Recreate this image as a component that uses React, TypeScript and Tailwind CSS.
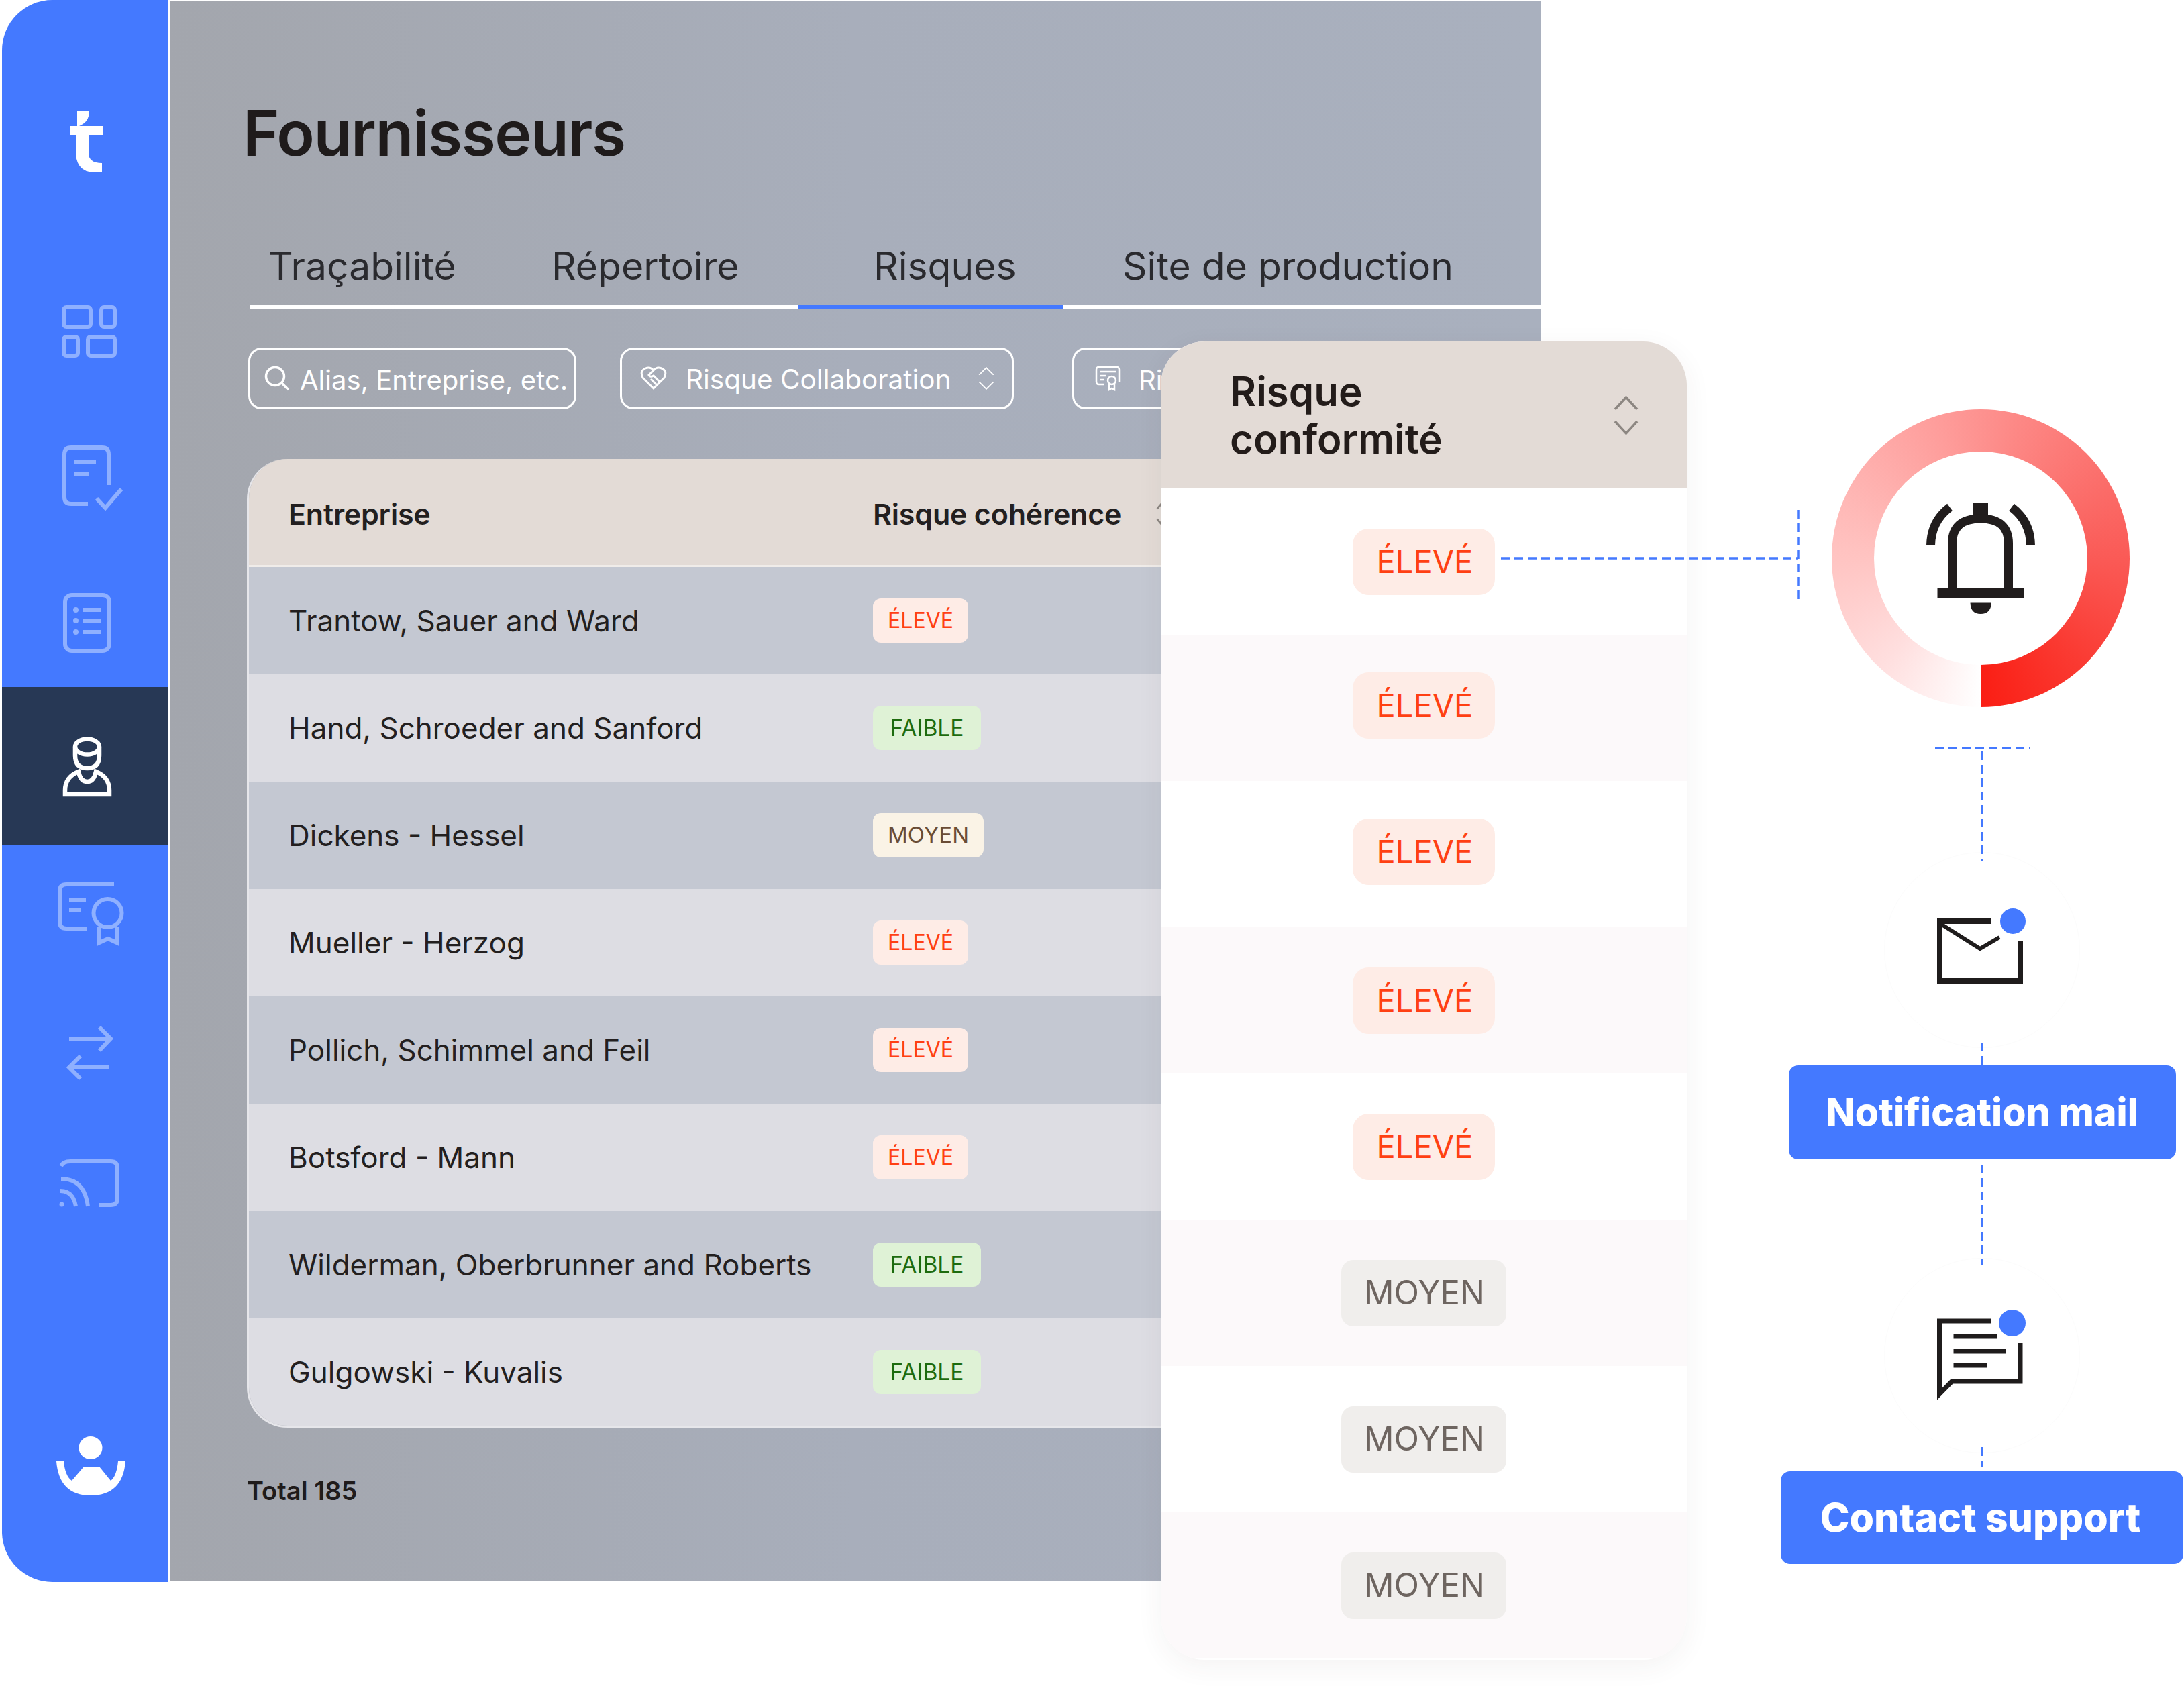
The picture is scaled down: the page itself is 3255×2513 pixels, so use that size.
import React from "react";

const INTER = "font-['Inter','Liberation_Sans',sans-serif]";

const rows: [string, "E" | "F" | "M"][] = [
  ["Trantow, Sauer and Ward", "E"],
  ["Hand, Schroeder and Sanford", "F"],
  ["Dickens - Hessel", "M"],
  ["Mueller - Herzog", "E"],
  ["Pollich, Schimmel and Feil", "E"],
  ["Botsford - Mann", "E"],
  ["Wilderman, Oberbrunner and Roberts", "F"],
  ["Gulgowski - Kuvalis", "F"],
];

function SmallBadge({ k }: { k: "E" | "F" | "M" }) {
  if (k === "E")
    return <span className="flex h-[66px] w-[142px] items-center justify-center rounded-[12px] bg-[#feece6] text-[32px] text-[#ff4013]">ÉLEVÉ</span>;
  if (k === "F")
    return <span className="flex h-[66px] w-[161px] items-center justify-center rounded-[12px] bg-[#dff2d6] text-[33.5px] text-[#1d6b0e]">FAIBLE</span>;
  return <span className="flex h-[66px] w-[165px] items-center justify-center rounded-[12px] bg-[#faf3e6] text-[33px] text-[#6a4c34]">MOYEN</span>;
}

function Chevrons({ className = "", color = "#8d8782", w = 37, h = 58, sw = 3.5 }: { className?: string; color?: string; w?: number; h?: number; sw?: number }) {
  return (
    <svg className={className} width={w} height={h} viewBox="0 0 37 58" fill="none" stroke={color} strokeWidth={sw} preserveAspectRatio="none">
      <path d="M2 20 L18.5 2 L35 20" />
      <path d="M2 38 L18.5 56 L35 38" />
    </svg>
  );
}

const iconC = "#8fb0ff";

function SideIcons() {
  return (
    <svg className="absolute left-[1px] top-0" width="247" height="2358" viewBox="0 0 247 2358" fill="none">
      {/* logo t */}
      <path fill="#fff" transform="translate(100 164)" d="M11 2 H29 Q29 18 14 24 H49 V37 H28 V64 Q28 79 48 79 V93 H38 Q9 93 9 62 V37 H0 V24 H11 Z" />
      <g transform="translate(-4 0)" stroke={iconC} strokeWidth="6">
        {/* dashboard */}
        <rect x="95" y="458" width="40" height="29" rx="4" />
        <rect x="151" y="458" width="20" height="29" rx="4" />
        <rect x="95" y="502" width="21" height="28" rx="4" />
        <rect x="131" y="502" width="40" height="28" rx="4" />
        {/* doc check */}
        <path d="M162 723 V677 Q162 667 152 667 H106 Q96 667 96 677 V741 Q96 751 106 751 H131" />
        <path d="M111 688 H143 M111 707 H133" />
        <path d="M144 743 L157 757 L181 729" />
        {/* list */}
        <rect x="97" y="887" width="66" height="83" rx="10" />
        <path d="M123 909 H151 M123 925 H151 M123 942 H151" />
        <circle cx="113" cy="909" r="4" fill={iconC} stroke="none" />
        <circle cx="113" cy="925" r="4" fill={iconC} stroke="none" />
        <circle cx="113" cy="942" r="4" fill={iconC} stroke="none" />
        {/* certificate */}
        <path d="M170 1318 H99 Q89 1318 89 1328 V1374 Q89 1384 99 1384 H130" />
        <path d="M103 1341 H128 M103 1357 H121" />
        <circle cx="160.500" cy="1361" r="21" />
        <path d="M148 1382 V1405 L161 1399 L174 1405 V1382" />
        {/* arrows */}
        <path d="M103 1548 H165 M148 1531 L165 1548 L148 1566" />
        <path d="M163 1591 H103 M120 1574 L103 1591 L120 1608" />
        {/* cast */}
        <path d="M91 1738 Q94 1731 105 1731 H165 Q175 1731 175 1741 V1786 Q175 1796 165 1796 H147" />
        <path d="M91 1757 Q126 1757 131 1798" />
        <path d="M90 1775 Q109 1775 113 1798" />
        <circle cx="92" cy="1795" r="3.500" fill={iconC} stroke="none" />
      </g>
      {/* user */}
      <g transform="translate(-4 0)" stroke="#fff" strokeWidth="6.500">
        <ellipse cx="130" cy="1113" rx="18" ry="11.500" />
        <path d="M112 1113 V1126 Q112 1145 130 1145 Q148 1145 148 1126 V1113" />
        <path d="M97 1184 H163 V1178 Q163 1158 143 1150 Q140 1165 130 1165 Q120 1165 117 1150 Q97 1158 97 1178 Z" />
      </g>
      {/* bottom person */}
      <g transform="translate(-4 0)" fill="#fff">
        <ellipse cx="135" cy="2158" rx="17.500" ry="17" />
        <path d="M84 2178 Q88 2229 135 2229 Q183 2229 187 2178 H176 Q174 2200 165 2207 L148 2186 H125 L107 2207 Q97 2200 95 2178 Z" />
      </g>
    </svg>
  );
}

function HDash({ w }: { w: number }) {
  return (
    <svg width={w} height="4" className="block shrink-0">
      <line x1="0" y1="2" x2={w} y2="2" stroke="#4479ff" strokeWidth="3.500" strokeDasharray="13 7" />
    </svg>
  );
}
function VDash({ h }: { h: number }) {
  return (
    <svg width="4" height={h} className="relative z-10 block shrink-0">
      <line x1="2" y1="0" x2="2" y2={h} stroke="#4479ff" strokeWidth="3.500" strokeDasharray="13 7" />
    </svg>
  );
}

function Bell() {
  return (
    <svg width="162" height="166" viewBox="0 0 162 166" fill="#211d1d">
      <rect x="70" y="0" width="22" height="20" />
      <path d="M38.500 130 V61 Q38.500 24 81 24 Q122.500 24 122.500 61 V130" fill="none" stroke="#211d1d" strokeWidth="13" />
      <rect x="16.500" y="127.500" width="129.500" height="14.500" />
      <path d="M65.500 149.500 H97 Q96 166 81 166 Q66 166 65.500 149.500 Z" />
      <path d="M6.500 64 Q7 28 35 7" fill="none" stroke="#211d1d" strokeWidth="13" />
      <path d="M155.500 64 Q155 28 127 7" fill="none" stroke="#211d1d" strokeWidth="13" />
    </svg>
  );
}

export default function App() {
  return (
    <div className={`relative flex h-[2513px] w-[3255px] overflow-hidden bg-white text-[#231f1f] ${INTER}`}>
      {/* App */}
      <div className="ml-[3px] flex h-[2358px] w-[2294px] shrink-0">
        <aside className="relative h-[2358px] w-[248px] shrink-0 rounded-l-[75px] bg-[#4479ff]">
          <div className="pt-[1024px]"><div className="h-[235px] w-[248px] bg-[#273855]" /></div>
          <SideIcons />
        </aside>
        <main className="ml-[2px] mt-[2px] h-[2354px] w-[2044px] bg-gradient-to-r from-[#a3a6ad] via-[#a8aebb] to-[#a9b0be] pl-[115px]">
          <h1 className="ml-[-6px] mt-[134px] h-[124px] text-[93px] font-semibold leading-[124px] tracking-[-0.015em] text-[#1f1b1b]">Fournisseurs</h1>
          <div className="mt-[80px] ml-[4px] flex h-[120px] w-[1925px] border-b-[5px] border-white text-[57px] leading-[114px]">
            <div className="w-[410px] pl-[28px] text-[#2a2a2e]">Traçabilité</div>
            <div className="w-[407px] pl-[40px] text-[#2a2a2e]">Répertoire</div>
            <div className="mb-[-5px] w-[395px] border-b-[5px] border-[#4479ff] pl-[113px] text-[#2a2a2e]">Risques</div>
            <div className="pl-[89px] text-[#2a2a2e]">Site de production</div>
          </div>
          <div className="ml-[2px] mt-[58px] flex h-[92px] items-center text-white">
            <div className="flex h-[92px] w-[489px] items-center rounded-[20px] border-[3px] border-white pl-[21px]">
              <svg width="38" height="38" viewBox="0 0 38 38" fill="none" stroke="#fff" strokeWidth="3.500"><circle cx="16" cy="16" r="13.500" /><path d="M26 26 L36 36" /></svg>
              <span className="ml-[15px] mt-[5px] whitespace-nowrap text-[40px]">Alias, Entreprise, etc.</span>
            </div>
            <div className="ml-[65px] flex h-[92px] w-[587px] items-center rounded-[20px] border-[3px] border-white pl-[27px]">
              <svg width="40" height="36" viewBox="0 0 40 36" fill="none" stroke="#fff" strokeWidth="3"><path d="M20 33 L4 17 Q-1 7 8 3 Q15 0 20 6 Q25 0 32 3 Q41 7 36 17 Z" /><path d="M20 6 L13 13 Q15 17 20 14 L29 23 M16 19 L24 27" /></svg>
              <span className="ml-[28px] mt-[5px] whitespace-nowrap text-[40.5px]">Risque Collaboration</span>
              <Chevrons className="ml-[40px]" color="#fff" w={24} h={34} sw={3} />
            </div>
            <div className="ml-[87px] flex h-[92px] w-[500px] items-center rounded-[20px] border-[3px] border-white pl-[31px]">
              <svg width="38" height="38" viewBox="0 0 38 38" fill="none" stroke="#fff" strokeWidth="2.500"><path d="M36 24 V6 Q36 2 32 2 H6 Q2 2 2 6 V24 Q2 28 6 28 H14" /><path d="M7 9 H31 M7 15 H16 M7 21 H14" /><circle cx="25" cy="22" r="6" /><path d="M21 27 V36 L25 34 L29 36 V27" /></svg>
              <span className="ml-[27px] mt-[5px] whitespace-nowrap text-[40px]">Risque</span>
            </div>
          </div>
          <div className="mt-[74px] w-[1500px] overflow-hidden rounded-[60px] border-b-[3px] border-l-[3px] border-[#e6e6ea]">
            <div className="flex h-[161px] items-center border-b-[3px] border-[#f0ece9] bg-[#e3dbd6] pl-[59px] pt-[6px] text-[43px] font-semibold tracking-[-0.005em] text-[#231f1f]">
              <div className="w-[871px]">Entreprise</div>
              <div className="whitespace-nowrap">Risque cohérence</div>
              <Chevrons className="ml-[52px]" w={30} h={50} />
            </div>
            {rows.map(([name, k], i) => (
              <div key={name} className={`flex h-[160px] items-center pl-[59px] text-[44px] ${i % 2 === 0 ? "bg-[#c4c8d2]" : "bg-[#dddde3]"}`}>
                <div className="w-[871px] whitespace-nowrap">{name}</div>
                <SmallBadge k={k} />
              </div>
            ))}
          </div>
          <div className="mt-[66px] text-[38px] font-semibold text-[#1f1b1b]">Total 185</div>
        </main>
      </div>

      {/* Right column */}
      <div className="ml-[357px] flex h-[2513px] w-[600px] shrink-0 flex-col items-center pt-[610px]">
        <div className="mr-[4px] flex h-[444px] w-[444px] shrink-0 items-center justify-center rounded-full bg-[conic-gradient(from_180deg,#ffffff_0%,#ffdede_12%,#ffc4c2_25%,#fe9d9b_45%,#fc7b78_60%,#fa5a56_75%,#fa3a32_88%,#fa1e14_100%)]">
          <div className="flex h-[318px] w-[318px] items-center justify-center rounded-full bg-white">
            <Bell />
          </div>
        </div>
        <div className="mt-[59px]"><HDash w={141} /></div>
        <div className="mt-[3px]"><VDash h={163} /></div>
        <div className="mt-[-13px] flex h-[292px] w-[292px] shrink-0 items-center justify-center rounded-full border border-[#fcfcfc] bg-white">
          <svg className="mb-[14px]" width="135" height="115" viewBox="0 0 135 115" fill="none" stroke="#1f1c1c" strokeWidth="8">
            <path d="M81 21 H4 V110 H124 V50" />
            <path d="M7 26 L64 62 L93 45" strokeWidth="6" />
            <circle cx="113" cy="21" r="19" fill="#4479ff" stroke="none" />
          </svg>
        </div>
        <div className="mt-[-8px]"><VDash h={34} /></div>
        <div className="flex h-[140px] w-[577px] shrink-0 items-center justify-center rounded-[14px] bg-[#4479ff] text-[57px] font-extrabold text-white">Notification mail</div>
        <div className="mt-[8px]"><VDash h={149} /></div>
        <div className="mt-[-10px] flex h-[291px] w-[292px] shrink-0 items-center justify-center rounded-full border border-[#fcfcfc] bg-white">
          <svg className="mb-[6px]" width="135" height="136" viewBox="0 0 135 136" fill="none" stroke="#1f1c1c" strokeWidth="7">
            <path d="M81 19 H3.500 V128 L22 109 H124 V52" />
            <path d="M24.500 42 H89 M24.500 64 H102 M24.500 85 H74" />
            <circle cx="112" cy="22" r="20" fill="#4479ff" stroke="none" />
          </svg>
        </div>
        <div className="mt-[-9px]"><VDash h={30} /></div>
        <div className="mt-[6px] flex h-[138px] w-[600px] shrink-0 items-center justify-center rounded-[14px] bg-[#4479ff] pr-[5px] text-[59px] font-extrabold text-white">Contact support</div>
      </div>

      {/* Floating column card */}
      <div className="absolute left-[1730px] top-[509px] flex h-[1965px] w-[784px] flex-col overflow-hidden rounded-[65px] bg-white shadow-[0_10px_40px_rgba(60,50,50,0.06)]">
        <div className="flex h-[219px] shrink-0 items-center bg-[#e3dbd6] pl-[103px] text-[60px] font-semibold leading-[71px] text-[#231c1a]">
          <div className="w-[572px]">Risque<br />conformité</div>
          <Chevrons className="" w={37} h={58} />
        </div>
        {Array.from({ length: 8 }).map((_, i) => {
          const high = i < 5;
          const lift = i === 1 || i === 2;
          return (
            <div key={i} className={`flex h-[218px] shrink-0 items-center justify-center ${i % 2 === 0 ? "bg-white" : "bg-[#fcf9fa]"}`}>
              {high ? (
                <span className={`flex h-[99px] w-[212px] items-center justify-center rounded-[24px] bg-[#feece6] pl-[3px] text-[47px] text-[#ff4013] ${lift ? "mb-[8px]" : ""}`}>ÉLEVÉ</span>
              ) : (
                <span className="flex h-[99px] w-[246px] items-center justify-center rounded-[18px] bg-[#f0eeec] pl-[2px] text-[49px] text-[#6e6560]">MOYEN</span>
              )}
            </div>
          );
        })}
      </div>

      {/* Connector from the badge to the ring */}
      <div className="absolute left-[2237px] top-[830px] flex items-center"><HDash w={443} /></div>
      <div className="absolute left-[2678px] top-[760px]"><VDash h={141} /></div>
    </div>
  );
}
